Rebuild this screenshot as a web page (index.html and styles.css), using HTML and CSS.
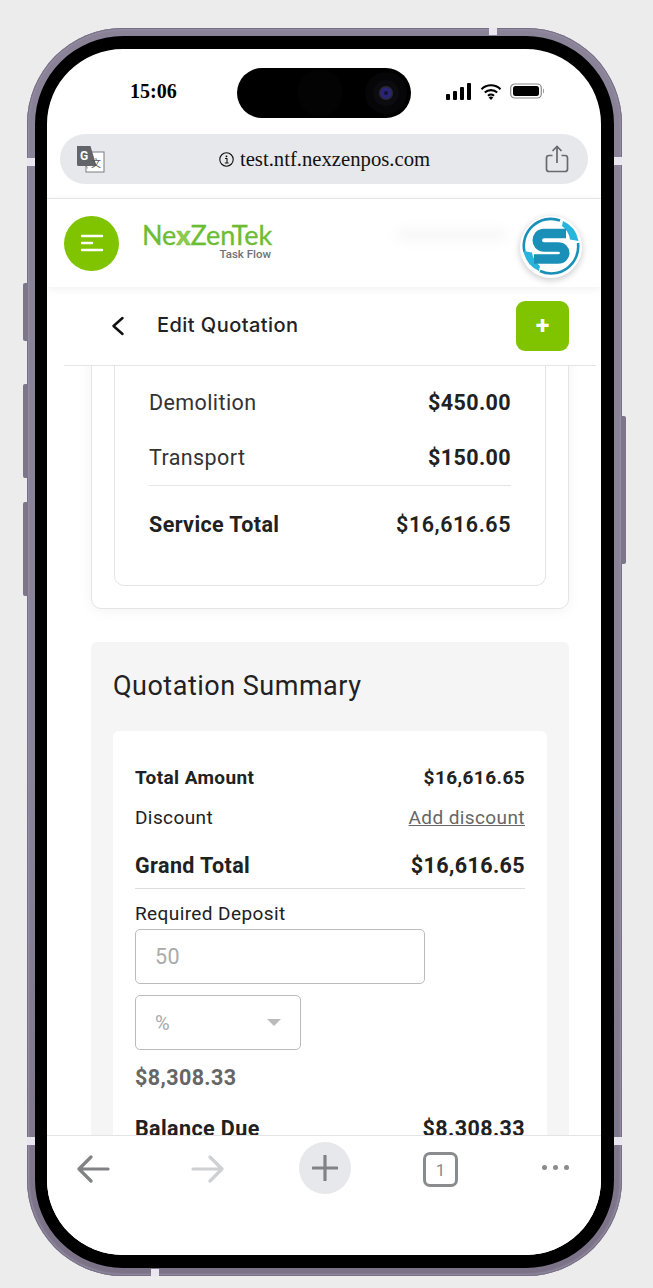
FILE: index.html
```html
<!DOCTYPE html>
<html lang="en">
<head>
<meta charset="utf-8">
<title>Edit Quotation</title>
<link rel="stylesheet" href="styles.css">
</head>
<body>
<div class="phone">
  <i class="btn b1"></i><i class="btn b2"></i><i class="btn b3"></i><i class="btn b4"></i>
  <i class="notch n1"></i><i class="notch n2"></i><i class="notch n3"></i><i class="notch n4"></i><i class="notch n5"></i><i class="notch n6"></i>
  <div class="bezel">
    <div class="screen">
      <div class="status">
        <span class="time">15:06</span>
        <div class="island">
          <svg class="lens" viewBox="0 0 44 44" width="44" height="44"><circle cx="22" cy="22" r="21" fill="#060608"/><circle cx="22" cy="22" r="13" fill="#0b0b10"/><circle cx="22" cy="22" r="7" fill="#2b2a33"/><circle cx="22" cy="22" r="5.500" fill="#2a2478"/><circle cx="22" cy="22" r="2" fill="#14122e"/></svg>
        </div>
        <div class="status-icons">
          <svg width="26" height="17" viewBox="0 0 26 17"><rect x="0" y="11" width="4" height="6" rx="1"/><rect x="7" y="8" width="4" height="9" rx="1"/><rect x="14" y="4" width="4" height="13" rx="1"/><rect x="21" y="0" width="4" height="17" rx="1"/></svg>
          <svg width="22" height="17" viewBox="0 0 22 17"><path d="M1.500 6.200a13.500 13.500 0 0 1 19 0M4.800 9.600a9 9 0 0 1 12.400 0M8 12.800a4.400 4.400 0 0 1 6 0" fill="none" stroke="#000" stroke-width="2.100"/><path d="M11 17l-2.300-2.500a3.300 3.300 0 0 1 4.600 0z"/></svg>
          <svg width="35" height="16" viewBox="0 0 35 16"><rect x="0.700" y="1" width="30.600" height="14" rx="4" fill="none" stroke="#888" stroke-width="1.200"/><rect x="3" y="3" width="26" height="10" rx="2.500"/><path d="M33 5.500c1.200.4 1.200 4.600 0 5z" fill="#888"/></svg>
        </div>
      </div>

      <div class="urlbar">
        <svg class="translate" width="29" height="28" viewBox="0 0 29 28">
          <rect x="10" y="7" width="18" height="20" fill="#fff" stroke="#7b7d80" stroke-width="1"/>
          <path d="M1 1h13.500l6 20h-9.500l1 3.500l-2-3.500H2.500a1.500 1.500 0 0 1-1.500-1.500z" fill="#63656a"/>
          <text x="4" y="15" class="g">G</text>
          <text x="15" y="22" class="wen">文</text>
        </svg>
        <div class="address">
          <svg width="15" height="15" viewBox="0 0 15 15"><circle cx="7.500" cy="7.500" r="6.700" fill="none" stroke="#111" stroke-width="1.100"/><path d="M6 6.500h2v4.500M5.800 11h3.800" fill="none" stroke="#111" stroke-width="1.100"/><circle cx="7.500" cy="4.300" r="0.900"/></svg>
          <span>test.ntf.nexzenpos.com</span>
        </div>
        <svg class="share" width="24" height="28" viewBox="0 0 24 28" fill="none" stroke="#66696d" stroke-width="1.700"><path d="M7.500 10.500H4a2.500 2.500 0 0 0-2.500 2.500v11A2.500 2.500 0 0 0 4 26.500h16a2.500 2.500 0 0 0 2.500-2.500V13a2.500 2.500 0 0 0-2.500-2.500h-3.500M12 18V1.500M7.500 6L12 1.500L16.500 6"/></svg>
      </div>

      <header class="app-header">
        <button class="menu">
          <svg width="24" height="18" viewBox="0 0 24 18" stroke="#fff" stroke-width="2.400" stroke-linecap="round"><path d="M2 2h20M2 9h10M2 16h20"/></svg>
        </button>
        <div class="logo">
          <div class="logo-name">Ne<span class="logo-x">x</span>ZenTek</div>
          <div class="logo-sub">Task Flow</div>
        </div>
        <div class="ghost"></div>
        <div class="brand">
          <svg width="62" height="62" viewBox="0 0 62 62" fill="none">
            <path d="M4.500 36A27 27 0 0 1 40 4.500" stroke="#1a8fb8" stroke-width="2.600"/>
            <path d="M58 27A27 27 0 0 1 20 55" stroke="#1a8fb8" stroke-width="2.600"/>
            <path d="M43 5A27 27 0 0 1 58.500 25L50 23.500A21 21 0 0 0 42 10z" fill="#27b5dc"/>
            <path d="M19 55A27 27 0 0 1 3.500 35L12 36.500A21 21 0 0 0 20 50z" fill="#27b5dc"/>
            <path d="M46 17.500H24C15 17.500 15 31 24 31H38C47 31 47 43 38 43H14" stroke="#1a8fb8" stroke-width="9.500"/>
          </svg>
        </div>
      </header>

      <div class="subheader">
        <svg class="back" width="14" height="20" viewBox="0 0 14 20" fill="none" stroke="#111" stroke-width="2.500" stroke-linecap="round" stroke-linejoin="round"><path d="M11.500 2L2.500 10l9 8"/></svg>
        <h1>Edit Quotation</h1>
        <button class="add">+</button>
      </div>

      <main class="content">
        <section class="card">
          <div class="inner">
            <div class="row"><span>Demolition</span><b>$450.00</b></div>
            <div class="row"><span>Transport</span><b>$150.00</b></div>
            <div class="row total"><b>Service Total</b><b class="medium">$16,616.65</b></div>
          </div>
        </section>

        <section class="summary">
          <h2>Quotation Summary</h2>
          <div class="sheet">
            <div class="line amount"><b>Total Amount</b><b>$16,616.65</b></div>
            <div class="line discount"><span>Discount</span><a href="#">Add discount</a></div>
            <div class="line grand"><b>Grand Total</b><b>$16,616.65</b></div>
            <label class="dep-label">Required Deposit</label>
            <div class="field wide">50</div>
            <div class="field narrow">%<i class="caret"></i></div>
            <div class="dep-value">$8,308.33</div>
            <div class="line balance"><b>Balance Due</b><b>$8.308.33</b></div>
          </div>
        </section>
      </main>

      <nav class="toolbar">
        <svg class="t-back" width="34" height="28" viewBox="0 0 34 28" fill="none" stroke="#808285" stroke-width="3.200" stroke-linecap="round" stroke-linejoin="round"><path d="M2 14h29M14 2L2 14l12 12"/></svg>
        <svg class="t-fwd" width="34" height="28" viewBox="0 0 34 28" fill="none" stroke="#cfd0d2" stroke-width="3.200" stroke-linecap="round" stroke-linejoin="round"><path d="M32 14H3M20 2l12 12l-12 12"/></svg>
        <div class="plus"><svg width="26" height="26" viewBox="0 0 26 26" stroke="#808285" stroke-width="3.200" stroke-linecap="round"><path d="M13 1v24M1 13h24"/></svg></div>
        <div class="tabs">1</div>
        <div class="dots"><i></i><i></i><i></i></div>
      </nav>
    </div>
  </div>
</div>
</body>
</html>
```
FILE: styles.css
```css
* { box-sizing: border-box; }
html, body { margin: 0; padding: 0; }
body {
  width: 653px;
  height: 1288px;
  background: #ececec;
  padding: 28px 31px 12px 27px;
  overflow: hidden;
  font-family: Roboto, "Liberation Sans", sans-serif;
  color: #212121;
}
.phone { position: relative; width: 595px; height: 1248px; }
.bezel {
  height: 100%;
  border-radius: 96px;
  padding: 8px;
  background: linear-gradient(180deg, #8a8296 0%, #8a8398 60%, #7b7287 100%);
  box-shadow: inset 0 0 0 1px #777084, inset 0 0 2px 2px #968fa6;
}
.screen {
  width: 100%;
  height: 100%;
  background: #fff;
  border: 13px solid #000;
  border-left-width: 12px;
  border-right-width: 13px;
  border-radius: 88px;
  overflow: hidden;
  display: flex;
  flex-direction: column;
}
.btn { position: absolute; background: #7d7689; border-radius: 2px 0 0 2px; width: 5px; left: -4px; }
.b1 { top: 255px; height: 58px; }
.b2 { top: 356px; height: 94px; }
.b3 { top: 474px; height: 94px; }
.b4 { top: 388px; height: 148px; left: auto; right: -4px; border-radius: 0 2px 2px 0; }
.notch { position: absolute; background: #e9e6ef; z-index: 2; }
.n1, .n2, .n3, .n4 { width: 8px; height: 8px; }
.n1 { left: 0; top: 130px; }
.n2 { right: 0; top: 129px; }
.n3 { left: 0; top: 1109px; }
.n4 { right: 0; top: 1109px; }
.n5 { left: 462px; top: 0; width: 8px; height: 7px; }
.n6 { left: 124px; bottom: 0; width: 8px; height: 7px; }

.status { height: 85px; flex: none; position: relative; display: flex; align-items: flex-start; }
.time {
  position: absolute; left: 83px; top: 30px;
  font: bold 20px/24px "Liberation Serif", serif; color: #000;
}
.island {
  position: absolute; left: 190px; top: 19px;
  width: 174px; height: 50px; border-radius: 25px; background: #000;
  display: flex; align-items: center; justify-content: flex-end; padding-right: 3px;
}
.island::before {
  content: ""; position: absolute; left: 60px; top: 2px; width: 46px; height: 46px;
  border-radius: 50%; background: #030304;
}
.status-icons { position: absolute; left: 399px; top: 33px; display: flex; align-items: center; gap: 8px; height: 18px; }

.urlbar {
  flex: none;
  margin: 0 13px;
  height: 50px;
  border-radius: 25px;
  background: #e7e8ec;
  display: flex;
  align-items: center;
  padding: 0 19px 0 16px;
}
.translate { flex: none; }
.g { font: bold 12px Roboto, sans-serif; fill: #fff; }
.wen { font: 10px "Noto Sans CJK SC", sans-serif; fill: #55575a; }
.address {
  flex: 1;
  display: flex; align-items: center; justify-content: center; gap: 6px;
  margin-left: -1px;
  font: 20.700px "Liberation Serif", serif; color: #111;
}
.share { flex: none; }

.app-header {
  flex: none;
  margin-top: 14px;
  height: 89px;
  border-top: 1px solid #e4e4e6;
  display: flex; align-items: center;
  padding: 0 17px;
  position: relative;
  box-shadow: 0 2px 8px rgba(0,0,0,.06);
  z-index: 1;
  background: #fff;
}
.menu {
  width: 55px; height: 55px; border-radius: 50%; border: 0; padding: 0;
  background: #80c400; display: flex; align-items: center; justify-content: center;
  flex: none;
}
.logo { margin-left: 23px; width: 129px; margin-top: -4px; }
.logo-name {
  font: 27px/25px Lato, sans-serif; color: #6dbd33; letter-spacing: -.1px; white-space: nowrap;
  -webkit-text-stroke: .3px #6dbd33;
}
.logo-x { color: #8ccb4c; font-weight: 900; }
.logo-sub { font: 500 11.500px/12px Roboto, sans-serif; color: #6f7277; text-align: right; margin-top: 1px; }
.ghost {
  position: absolute; left: 350px; top: 30px; width: 110px; height: 12px;
  background: rgba(0,0,0,.03); filter: blur(6px);
}
.brand {
  position: absolute; right: 19px; top: 17px; width: 62px; height: 62px;
  border-radius: 50%; background: #fff; box-shadow: 0 2px 7px rgba(0,0,0,.22);
}
.brand svg { display: block; }

.subheader {
  flex: none;
  height: 79px;
  margin: 0 5px 0 17px;
  border-bottom: 1px solid #e4e4e6;
  display: flex; align-items: center;
  padding: 0 27px 0 47px;
  background: #fff;
  position: relative;
}
.back { flex: none; }
h1 {
  margin: -2px 0 0 32px; flex: 1;
  font: 500 20px Inter, sans-serif; letter-spacing: .45px; color: #222;
}
.add {
  width: 53px; height: 50px; border: 0; border-radius: 9px; background: #80c400;
  color: #fff; font: bold 25px/50px Roboto, sans-serif; padding: 0;
}

.content {
  flex: 1; min-height: 0; overflow: hidden;
  padding: 0 32px 0 44px;
  display: flex; flex-direction: column; align-items: stretch;
  letter-spacing: .4px;
}
.card {
  flex: none;
  margin-top: -32px;
  border: 1px solid #e4e4e6; border-radius: 10px;
  padding: 0 22px 22px;
  box-shadow: 0 2px 14px rgba(0,0,0,.05);
  background: #fff;
}
.inner {
  border: 1px solid #e4e4e6; border-radius: 10px;
  padding: 39px 34px 22px;
}
.row {
  display: flex; justify-content: space-between; align-items: center;
  height: 55px; font-size: 21.500px; color: #333;
}
.row b { font-weight: 700; color: #212121; }
.row .medium { font-weight: 600; letter-spacing: .55px; }
.total { border-top: 1px solid #e4e4e6; height: 78px; }

.summary {
  flex: none;
  margin-top: 33px;
  background: #f5f5f5;
  border-radius: 6px;
  padding: 0 22px 22px;
}
h2 { margin: 0; padding-top: 27px; height: 89px; font: 400 27px/34px Roboto, sans-serif; letter-spacing: .5px; color: #222; }
.sheet { background: #fff; border-radius: 6px; padding: 34px 22px 30px; }
.line { display: flex; justify-content: space-between; align-items: center; font-size: 19px; }
.amount { height: 24px; }
.amount b { font-weight: 700; }
.discount { height: 24px; margin-top: 16px; }
.discount a { color: #666; text-decoration: underline; }
.grand { height: 39px; margin-top: 21px; padding-bottom: 8px; font-size: 21.500px; border-bottom: 1px solid #ddd; }
.balance { height: 32px; margin-top: 22px; font-size: 21.500px; }
.dep-label { display: block; margin-top: 13px; font-size: 19px; line-height: 24px; }
.field {
  border: 1px solid #bbb; border-radius: 5px; color: #aaa;
  display: flex; align-items: center; padding-left: 19px; font-size: 21.500px;
}
.wide { width: 290px; height: 55px; margin-top: 3px; }
.narrow { width: 166px; height: 55px; margin-top: 11px; font-size: 20px; justify-content: space-between; padding-right: 19px; }
.caret { width: 0; height: 0; border: 7px solid transparent; border-top: 7px solid #bbb; border-bottom: 0; }
.dep-value { margin-top: 15px; font-size: 21.500px; font-weight: 700; color: #666; }

.toolbar {
  flex: none; height: 120px;
  border-top: 1px solid #e4e4e6;
  background: #fff;
  display: flex; align-items: flex-start;
  padding: 6px 0 0 30px;
  position: relative;
}
.toolbar > svg { margin-top: 13px; flex: none; }
.t-fwd { margin-left: 79px; }
.plus {
  width: 52px; height: 52px; border-radius: 50%; background: #e7e8ec;
  display: flex; align-items: center; justify-content: center;
  margin-left: 75px; flex: none;
}
.tabs {
  width: 35px; height: 35px; margin: 10px 0 0 72px; flex: none;
  border: 3px solid #888c8f; border-radius: 7px;
  color: #888c8f; font-size: 17px;
  display: flex; align-items: center; justify-content: center;
}
.dots { display: flex; gap: 6px; margin: 23px 0 0 84px; width: 28px; flex: none; }
.dots i { width: 5px; height: 5px; border-radius: 50%; background: #888c8f; flex: none; }
```
